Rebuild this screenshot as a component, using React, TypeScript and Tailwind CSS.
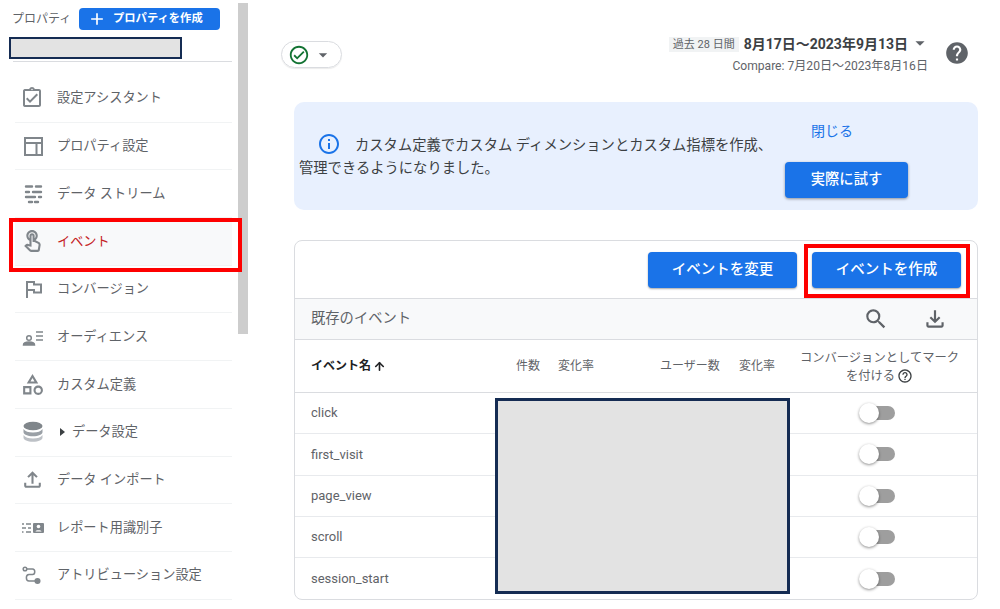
import React from 'react';
import {
  MdAdd,
  MdArrowDropDown,
  MdHelp,
  MdInfoOutline,
  MdOutlineAssignmentTurnedIn,
  MdOutlineCategory,
  MdOutlineCheckCircle,
  MdOutlineFileDownload,
  MdOutlineFileUpload,
  MdOutlineHelpOutline,
  MdOutlineTouchApp,
  MdSearch,
} from 'react-icons/md';
import { ArrowUp } from 'lucide-react';

const LayoutIcon = () => (
  <svg width="24" height="24" viewBox="0 0 24 24" fill="none" stroke="#80868b" strokeWidth="2">
    <rect x="5" y="4" width="17" height="17" />
    <path d="M5 9h17M16.500 9v12" />
  </svg>
);

const StreamIcon = () => (
  <svg width="24" height="24" viewBox="0 0 24 24" fill="none" stroke="#80868b" strokeWidth="2.400" strokeLinecap="round">
    <path d="M6 4.500h6M16 4.500h5M6 10h3M13 10h8M6 15h9M19 15h2M9 20h3M15 20h3" />
  </svg>
);

const FlagIcon = () => (
  <svg width="24" height="24" viewBox="0 0 24 24" fill="none" stroke="#80868b" strokeWidth="2">
    <path d="M7 21V5h7v2.500h7v8h-7V13H7" />
  </svg>
);

const AudienceIcon = () => (
  <svg width="24" height="24" viewBox="0 0 24 24" fill="none" stroke="#80868b" strokeWidth="1.500">
    <circle cx="9" cy="13" r="2.300" />
    <path d="M3.500 20c0-2.200 2.500-3 5.500-3s5.500 0.800 5.500 3z" fill="#80868b" />
    <path d="M16 7h7M16 11h7M16 15h7" />
  </svg>
);

const StorageIcon = () => (
  <svg width="24" height="24" viewBox="0 0 24 24" fill="#80868b">
    <ellipse cx="13" cy="6" rx="9.500" ry="4.300" />
    <path d="M3.500 9c1.500 2.500 5 3.500 9.500 3.500s8-1 9.500-3.500v3c0 2.500-4 4.300-9.500 4.300s-9.500-1.800-9.500-4.300z" fill="#9aa0a6" />
    <path d="M3.500 15c1.500 2.500 5 3.500 9.500 3.500s8-1 9.500-3.500v2.500c0 2.500-4 4.300-9.500 4.300s-9.500-1.800-9.500-4.300z" fill="#bdc1c6" />
  </svg>
);

const IdentityIcon = () => (
  <svg width="24" height="24" viewBox="0 0 24 24" fill="none">
    <path d="M2 8h2M6 8h5M2 12h4M8 12h3M2 16h1.500M6 16h5" stroke="#80868b" strokeWidth="1.600" />
    <rect x="13" y="7" width="11" height="10" rx="1" fill="#80868b" />
    <circle cx="18.500" cy="10.500" r="1.800" fill="#fff" />
    <path d="M15.500 15.500c0-1.700 6-1.700 6 0z" fill="#fff" />
  </svg>
);

const AttributionIcon = () => (
  <svg width="24" height="24" viewBox="0 0 24 24" fill="none" stroke="#80868b" strokeWidth="1.500">
    <circle cx="5" cy="6" r="1.800" />
    <path d="M7 6h5.500c3 0 3 5.500 0 5.500H9c-3.500 0-3.500 6.500 0 6.500h6" />
    <circle cx="17.500" cy="18" r="2.300" fill="#80868b" />
  </svg>
);

const gray = '#80868b';

const navItems: { label: string; icon: React.ReactNode; active?: boolean; caret?: boolean }[] = [
  { label: '設定アシスタント', icon: <MdOutlineAssignmentTurnedIn size={24} color={gray} /> },
  { label: 'プロパティ設定', icon: <LayoutIcon /> },
  { label: 'データ ストリーム', icon: <StreamIcon /> },
  { label: 'イベント', icon: <MdOutlineTouchApp size={25} color={gray} />, active: true },
  { label: 'コンバージョン', icon: <FlagIcon /> },
  { label: 'オーディエンス', icon: <AudienceIcon /> },
  { label: 'カスタム定義', icon: <MdOutlineCategory size={25} color={gray} /> },
  { label: 'データ設定', icon: <StorageIcon />, caret: true },
  { label: 'データ インポート', icon: <MdOutlineFileUpload size={25} color={gray} /> },
  { label: 'レポート用識別子', icon: <IdentityIcon /> },
  { label: 'アトリビューション設定', icon: <AttributionIcon /> },
];

const events = ['click', 'first_visit', 'page_view', 'scroll', 'session_start'];

function Toggle() {
  return (
    <div className="relative h-[14px] w-[26px] rounded-full bg-[#9e9e9e]">
      <div className="absolute left-[-10px] top-[-3px] h-5 w-5 rounded-full bg-white shadow-[0_1px_3px_rgba(0,0,0,0.45)]"></div>
    </div>
  );
}

function Sidebar() {
  return (
    <aside className="relative w-[238px] shrink-0">
      <div className="flex items-center pl-3 pt-2 h-[30px]">
        <span className="text-xs text-[#5f6368] w-[67px]">プロパティ</span>
        <button className="flex h-[22px] w-[141px] items-center rounded bg-[#1a73e8] pl-[8px] text-[11.300px] font-bold text-white">
          <MdAdd size={20} className="mr-[6px]" />
          プロパティを作成
        </button>
      </div>
      <div className="ml-[9px] mt-[7px] h-[22px] w-[173px] border-2 border-[#152c53] bg-[#e3e3e3]"></div>
      <div className="ml-[13px] mt-[2px] h-px w-[219px] bg-[#dadce0]"></div>
      <nav className="ml-[15px] mt-[13px] w-[217px]">
        {navItems.map((item) => (
          <div
            key={item.label}
            className={`flex h-[47.700px] items-center border-b border-[#f1f3f4] ${item.active ? 'bg-[#f8f9fa] text-[#c5221f]' : 'text-[#5f6368]'}`}
          >
            <span className="flex w-[35px] shrink-0 justify-start pl-[5px]">{item.icon}</span>
            <span className="pl-[7px] text-[13.200px] whitespace-nowrap">
              {item.caret && <span className="mr-[7px] ml-[3px] inline-block border-y-[4px] border-l-[5px] border-y-transparent border-l-[#3c4043]"></span>}
              {item.label}
            </span>
          </div>
        ))}
      </nav>
      <div className="absolute left-[9px] top-[218px] h-[54px] w-[233px] border-4 border-[#fe0000]"></div>
    </aside>
  );
}

function TopBar() {
  return (
    <div className="flex h-[102px] items-start justify-between pr-[8px]">
      <div className="ml-[-13px] mt-[41px] flex h-[27px] w-[61px] items-center gap-[3px] rounded-full border border-[#dadce0] pl-[6px] shadow-[0_1px_1px_rgba(0,0,0,0.08)]">
        <MdOutlineCheckCircle size={22} color="#137333" />
        <MdArrowDropDown size={20} color="#5f6368" />
      </div>
      <div className="mt-[36px] flex items-start">
        <div className="flex flex-col items-end">
          <div className="flex h-4 items-center">
            <span className="bg-[#f1f3f4] px-1 text-[11px] leading-[15px] text-[#5f6368]">過去 28 日間</span>
            <span className="ml-[5px] text-sm font-bold text-[#3c4043]">8月17日～2023年9月13日</span>
            <MdArrowDropDown size={22} color="#5f6368" className="ml-[1px] mr-[-3px] mt-[-3px]" />
          </div>
          <span className="mt-[5px] text-[12.100px] text-[#5f6368]">Compare: 7月20日～2023年8月16日</span>
        </div>
        <MdHelp size={26} color="#5f6368" className="ml-[16px] mt-[4px]" />
      </div>
    </div>
  );
}

function Banner() {
  return (
    <div className="flex h-[108px] rounded-[10px] bg-[#e8f0fe]">
      <p className="w-[486px] pl-[5px] pt-[30px] text-[14.300px] leading-[23px] text-[#3c4043]">
        <MdInfoOutline size={24} color="#1a73e8" className="ml-[18px] mr-[14px] inline-block align-[-6px]" />
        カスタム定義でカスタム ディメンションとカスタム指標を作成、
        <br />
        管理できるようになりました。
      </p>
      <div className="ml-[5px] flex w-[123px] flex-col">
        <a className="ml-[26px] mt-[19px] text-sm text-[#1a73e8]">閉じる</a>
        <button className="mt-[21px] h-9 w-[123px] rounded bg-[#1a73e8] text-[14.300px] font-medium text-white shadow-[0_1px_3px_rgba(0,0,0,0.4)]">
          実際に試す
        </button>
      </div>
    </div>
  );
}

function EventsTable() {
  return (
    <div className="relative mt-[30px] rounded-lg border border-[#dadce0]">
      <div className="flex h-[58px] items-center justify-end gap-[15px] border-b border-[#dadce0] pr-4">
        <button className="h-9 w-[149px] rounded bg-[#1a73e8] text-[14.500px] font-medium text-white shadow-[0_1px_2px_rgba(0,0,0,0.35)]">
          イベントを変更
        </button>
        <button className="h-9 w-[149px] rounded bg-[#1a73e8] text-[14.500px] font-medium text-white shadow-[0_1px_2px_rgba(0,0,0,0.35)]">
          イベントを作成
        </button>
      </div>
      <div className="flex h-[41px] items-center border-b border-[#dadce0] bg-[#f8f9fa] pl-4 pr-[29px] text-[14.300px] text-[#5f6368]">
        <span className="flex-1">既存のイベント</span>
        <MdSearch size={26} color="#5f6368" />
        <MdOutlineFileDownload size={26} color="#5f6368" className="ml-[33px]" />
      </div>
      <div className="flex h-[53px] items-center border-b border-[#dadce0] text-xs text-[#5f6368]">
        <span className="flex w-[221px] items-center pl-4 font-bold text-[#202124]">
          イベント名
          <ArrowUp size={13} strokeWidth={3} className="ml-[2px]" />
        </span>
        <span className="w-[42px]">件数</span>
        <span className="w-[102px]">変化率</span>
        <span className="w-[79px]">ユーザー数</span>
        <span className="w-[50px]">変化率</span>
        <span className="w-[175px] pl-[6px] pt-[2px] text-center text-[12.300px] leading-[18px]">
          コンバージョンとしてマーク
          <br />
          を付ける
          <MdOutlineHelpOutline size={16} color="#3c4043" className="ml-[2px] inline-block align-[-4px]" />
        </span>
      </div>
      {events.map((name, i) => (
        <div
          key={name}
          className={`flex h-[41.300px] items-center justify-between pl-4 pr-[82px] text-[13px] text-[#5f6368] ${i < events.length - 1 ? 'border-b border-[#e8eaed]' : ''}`}
        >
          <span>{name}</span>
          <Toggle />
        </div>
      ))}
      <div className="absolute left-[200px] top-[157px] h-[196px] w-[295px] border-[3px] border-[#152c53] bg-[#e3e3e3]"></div>
      <div className="absolute left-[509px] top-[3px] h-[54px] w-[166px] border-4 border-[#fe0000]"></div>
    </div>
  );
}

export default function App() {
  return (
    <div className="flex h-[609px] w-[1000px] overflow-hidden bg-white font-['Roboto','Noto_Sans_CJK_JP',sans-serif]">
      <Sidebar />
      <div className="mt-[3px] h-[331px] w-[10px] shrink-0 bg-[#cdcdcd]"></div>
      <main className="w-[752px] shrink-0 pl-[46px] pr-[22px]">
        <TopBar />
        <Banner />
        <EventsTable />
      </main>
    </div>
  );
}
